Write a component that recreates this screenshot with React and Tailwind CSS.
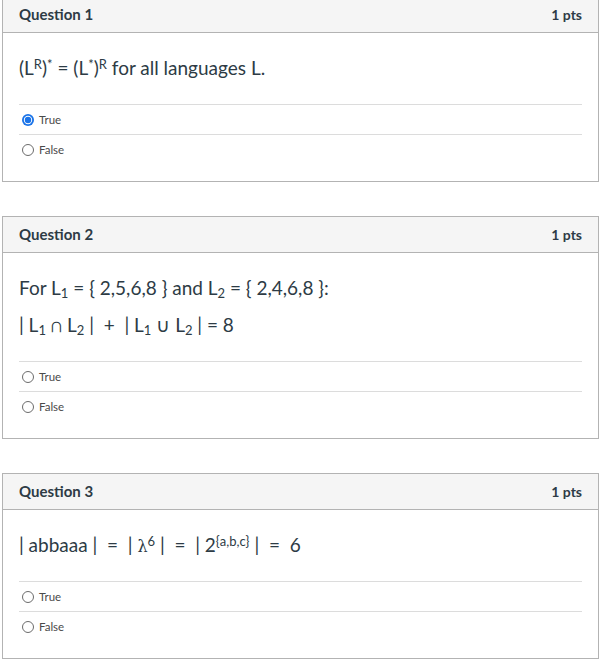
import React from 'react';

const Radio = ({ checked }) => (
  <svg width="12" height="12" viewBox="0 0 12 12" className="shrink-0">
    {checked ? (
      <>
        <circle cx="6" cy="6" r="6" fill="#1a73e8" />
        <circle cx="6" cy="6" r="4.2" fill="#ffffff" />
        <circle cx="6" cy="6" r="3.2" fill="#1a73e8" />
      </>
    ) : (
      <circle cx="6" cy="6" r="5.5" fill="#ffffff" stroke="#6b6b6b" strokeWidth="1" />
    )}
  </svg>
);

const Option = ({ label, checked }) => (
  <div className="h-[30px] border-t border-[#dcdcdc] flex items-center gap-[5px] pl-[3px]">
    <Radio checked={checked} />
    <span className="text-[11.5px] text-[#4a4a4a]">{label}</span>
  </div>
);

const Question = ({ number, children, answer, first }) => (
  <div className={`border border-[#b3b3b3] bg-white ${first ? '-mt-[4px]' : 'mt-[34px]'}`}>
    <div className="h-[36px] bg-[#f5f5f5] border-b border-[#b3b3b3] px-4 flex items-center justify-between">
      <span className="font-bold text-[15px] text-[#2d3b45]">Question {number}</span>
      <span className="font-bold text-[14px] text-[#2d3b45]">1 pts</span>
    </div>
    <div className="px-4 pt-[21px] pb-[17px]">
      <div className="text-[19px] leading-[27px] text-[#2d3b45] mb-[23px] flex flex-col gap-[10px]">
        {children}
      </div>
      <Option label="True" checked={answer === true} />
      <Option label="False" checked={false} />
    </div>
  </div>
);

const Sup = ({ children }) => (
  <sup className="text-[13px]">{children}</sup>
);

const Sub = ({ children }) => (
  <sub className="text-[13px]">{children}</sub>
);

export default function App() {
  return (
    <div className="w-[610px] h-[664px] overflow-hidden bg-white pl-[2px] pr-[11px]" style={{ fontFamily: 'Lato, "Liberation Sans", sans-serif' }}>
      <Question number={1} answer={true} first>
        <p>
          (L<Sup>R</Sup>)<Sup>*</Sup> = (L<Sup>*</Sup>)<Sup>R</Sup> for all languages L.
        </p>
      </Question>
      <Question number={2}>
        <p>
          For L<Sub>1</Sub> = {'{'} 2,5,6,8 {'}'} and L<Sub>2</Sub> = {'{'} 2,4,6,8 {'}'}:
        </p>
        <p>
          | L<Sub>1</Sub> ∩ L<Sub>2</Sub> |&nbsp;&nbsp;+&nbsp;&nbsp;| L<Sub>1</Sub> ∪ L<Sub>2</Sub> | = 8
        </p>
      </Question>
      <Question number={3}>
        <p>
          | abbaaa |&nbsp;&nbsp;=&nbsp;&nbsp;| <span style={{ fontFamily: '"DejaVu Serif", serif' }} className="text-[16px] leading-none">λ</span><Sup>6</Sup> |&nbsp;&nbsp;=&nbsp;&nbsp;| 2<Sup>{'{a,b,c}'}</Sup> |&nbsp;&nbsp;=&nbsp;&nbsp;6
        </p>
      </Question>
    </div>
  );
}
